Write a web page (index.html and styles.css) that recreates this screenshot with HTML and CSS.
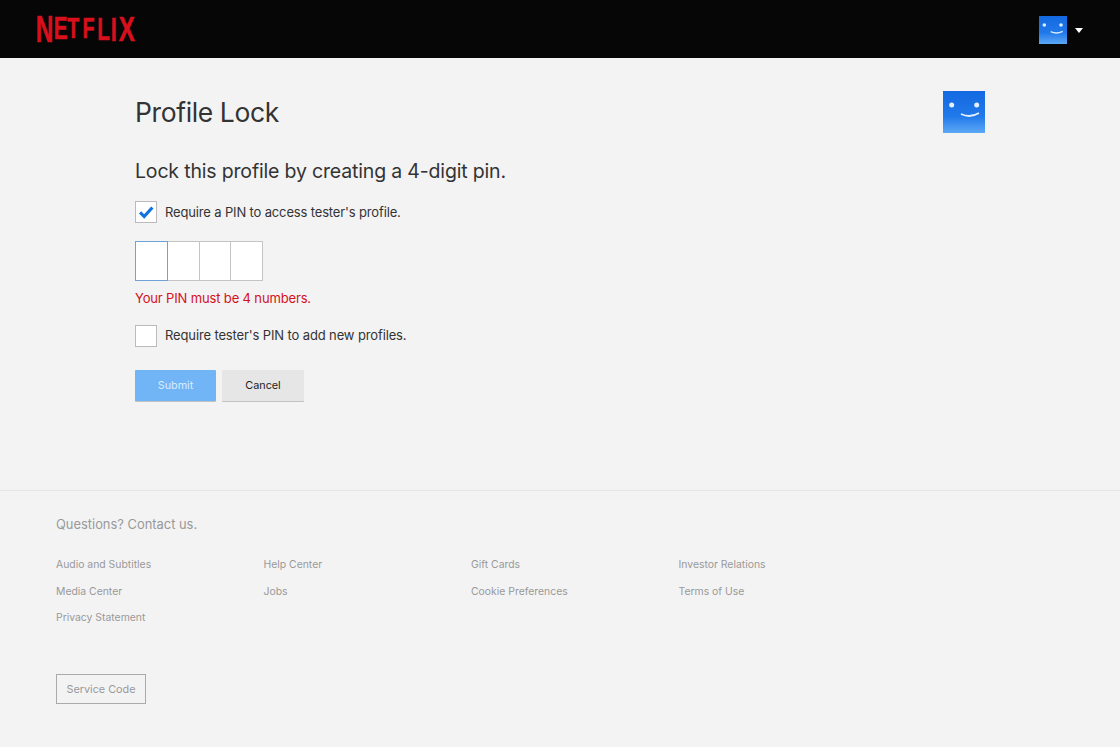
FILE: index.html
```html
<!DOCTYPE html>
<html lang="en">
<head>
<meta charset="utf-8">
<title>Profile Lock</title>
<link rel="stylesheet" href="styles.css">
</head>
<body>
<header class="topbar">
  <svg class="logo" viewBox="0 0 99 28" role="img" aria-label="Netflix"><g transform="scale(.67 1)"><text class="logo-text"><tspan class="l1" x="-2" y="27.7">N</tspan><tspan class="l2" x="25" y="25">E</tspan><tspan class="l3" x="45" y="23.7">T</tspan><tspan class="l3" x="68" y="23.7">F</tspan><tspan class="l2" x="90" y="25.5">L</tspan><tspan class="l4" x="110" y="26.500">I</tspan><tspan class="l5" x="122" y="27.400">X</tspan></text></g></svg>
  <div class="account">
    <svg class="avatar avatar-small" viewBox="0 0 42 42"><defs><linearGradient id="g1" x1="0" y1="0" x2="0" y2="1"><stop offset="0" stop-color="#1469e0"/><stop offset=".6" stop-color="#2079ea"/><stop offset="1" stop-color="#5da8f6"/></linearGradient></defs><rect width="42" height="42" fill="url(#g1)"/><circle cx="8" cy="13.5" r="2.7" fill="#dcecff"/><circle cx="33" cy="13.5" r="2.7" fill="#dcecff"/><path d="M17.500 23.500q9 4 18-.5" fill="none" stroke="#dcecff" stroke-width="2.200"/></svg>
    <span class="caret"></span>
  </div>
</header>
<main class="content">
  <div class="title-row">
    <h1 class="title">Profile Lock</h1>
    <svg class="avatar avatar-large" viewBox="0 0 42 42"><defs><linearGradient id="g2" x1="0" y1="0" x2="0" y2="1"><stop offset="0" stop-color="#1469e0"/><stop offset=".6" stop-color="#2079ea"/><stop offset="1" stop-color="#5da8f6"/></linearGradient></defs><rect width="42" height="42" fill="url(#g2)"/><circle cx="8.700" cy="14" r="2.500" fill="#e4f0ff"/><circle cx="33.700" cy="14" r="2.500" fill="#e4f0ff"/><path d="M18 23q9 4.500 18-1" fill="none" stroke="#e4f0ff" stroke-width="1.800"/></svg>
  </div>
  <h2 class="subtitle">Lock this profile by creating a 4-digit pin.</h2>
  <label class="check-row first">
    <span class="box"><svg class="tick" viewBox="0 0 22 22"><path d="M4.500 11.500l4.500 4.500 9-10" fill="none" stroke="#0f73e0" stroke-width="3.500"/></svg></span>
    <span>Require a PIN to access tester's profile.</span>
  </label>
  <div class="pin">
    <span class="digit active"></span><span class="digit"></span><span class="digit"></span><span class="digit"></span>
  </div>
  <p class="error">Your PIN must be 4 numbers.</p>
  <label class="check-row second">
    <span class="box"></span>
    <span class="row-text-tight">Require tester's PIN to add new profiles.</span>
  </label>
  <div class="actions">
    <button class="btn btn-submit" type="button">Submit</button>
    <button class="btn btn-cancel" type="button">Cancel</button>
  </div>
</main>
<footer class="footer">
  <p class="contact">Questions? Contact us.</p>
  <ul class="links">
    <li>Audio and Subtitles</li><li>Help Center</li><li>Gift Cards</li><li>Investor Relations</li>
    <li>Media Center</li><li>Jobs</li><li>Cookie Preferences</li><li>Terms of Use</li>
    <li>Privacy Statement</li>
  </ul>
  <button class="service" type="button">Service Code</button>
</footer>
</body>
</html>
```
FILE: styles.css
```css
* { box-sizing: border-box; }
html, body { margin: 0; padding: 0; }
body {
  width: 1120px;
  height: 747px;
  overflow: hidden;
  background: #f3f3f4;
  font-family: Inter, "Liberation Sans", sans-serif;
  color: #333;
}
.topbar {
  height: 58px;
  background: #060606;
  display: flex;
  align-items: center;
  justify-content: space-between;
  padding: 0 37px 2px 37px;
}
.logo { width: 99px; height: 28px; display: block; overflow: visible; }
.logo-text {
  font-family: "Liberation Sans", sans-serif;
  font-weight: 700;
  fill: #d9101c;
  stroke: #d9101c;
  stroke-width: .5px;
}
.l1 { font-size: 36.5px; }
.l2 { font-size: 31px; }
.l3 { font-size: 29.5px; }
.l4 { font-size: 33px; }
.l5 { font-size: 36px; }
.account { display: flex; align-items: center; gap: 8px; padding-top: 4px; }
.avatar { display: block; }
.avatar-small { width: 28px; height: 28px; }
.avatar-large { width: 42px; height: 42px; margin-top: 33px; }
.caret {
  width: 0; height: 0;
  border-left: 4.5px solid transparent;
  border-right: 4.5px solid transparent;
  border-top: 5px solid #fff;
}
.content { padding: 0 135px; height: 432px; }
.title-row { display: flex; justify-content: space-between; height: 92px; }
.title {
  margin: 36px 0 0;
  font-size: 26.5px;
  letter-spacing: -.38px;
  line-height: 36px;
  font-weight: 400;
  color: #333;
}
.subtitle {
  margin: 5px 0 0;
  font-size: 19.5px;
  letter-spacing: -.17px;
  line-height: 32px;
  font-weight: 400;
  color: #333;
}
.check-row {
  display: flex;
  align-items: center;
  gap: 8px;
  font-size: 13px;
  letter-spacing: -.15px;
  line-height: 22px;
  color: #333;
}
.check-row.first { margin-top: 14px; }
.check-row.second { margin-top: 18px; }
.row-text-tight { letter-spacing: -.13px; margin-top: -2px; }
.box {
  width: 22px; height: 22px;
  background: #fff;
  border: 1px solid #bbb;
  display: block;
  flex: none;
}
.tick { display: block; width: 20px; height: 20px; }
.pin { display: flex; margin-top: 18px; width: 128px; }
.digit {
  width: 32px; height: 40px;
  background: #fff;
  border: 1px solid #c4c4c4;
  border-left-width: 0;
}
.digit.active {
  width: 33px;
  border: 1px solid #6fa3d8;
}
.error {
  margin: 8px 0 0;
  font-size: 13px;
  letter-spacing: -.15px;
  line-height: 18px;
  color: #d4111b;
}
.actions { display: flex; gap: 6px; margin-top: 23px; }
.btn {
  height: 31px;
  width: 81px;
  border: 0;
  font-family: inherit;
  font-size: 10.8px;
  padding: 0;
  border-radius: 1px;
}
.btn-submit {
  background: #71b5f7;
  color: #d9ecfd;
  box-shadow: 0 1px 0 rgba(0,0,0,.2);
}
.btn-cancel {
  width: 82px;
  background: #e6e6e6;
  color: #222;
  box-shadow: 0 1px 0 rgba(0,0,0,.2);
}
.footer {
  border-top: 1px solid #e6e6e6;
  padding: 24px 56px 0;
  color: #999;
}
.contact { margin: 0; padding-top: 1px; font-size: 12.9px; line-height: 18px; color: #999; }
.links {
  list-style: none;
  margin: 18px 0 0;
  padding: 0;
  display: grid;
  grid-template-columns: repeat(4, 207.5px);
  grid-auto-rows: 26.5px;
  font-size: 10.4px;
  line-height: 26.5px;
  color: #999;
}
.service {
  display: block;
  margin-top: 42px;
  width: 90px;
  height: 30px;
  background: transparent;
  border: 1px solid #aaa;
  color: #999;
  font-family: inherit;
  font-size: 10.8px;
  padding: 1px 0 0;
}
```
